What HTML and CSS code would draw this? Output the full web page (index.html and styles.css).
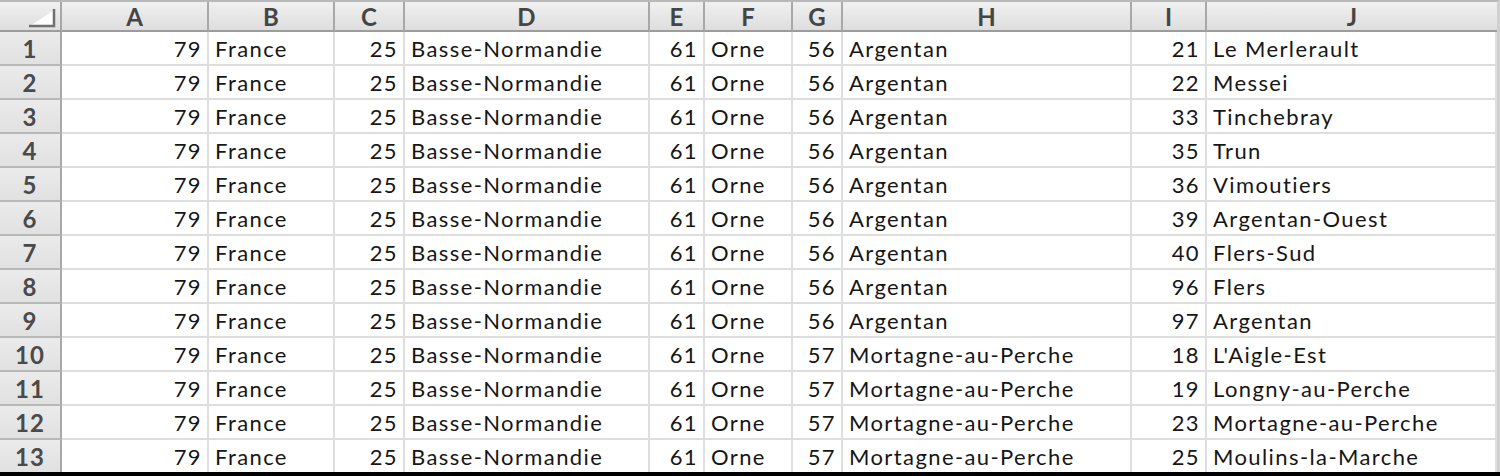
FILE: index.html
```html
<!DOCTYPE html>
<html>
<head>
<meta charset="utf-8">
<link rel="stylesheet" href="styles.css">
</head>
<body>
<div class="sheet">
  <div class="grid">
    <div class="hd corner"><svg class="tri" width="28" height="20" viewBox="0 0 28 20"><polygon points="25,1 25,17 1,17" fill="#fdfdfd"/><polyline points="25,0 25,17 0,17" fill="none" stroke="#6f6f6f" stroke-width="2.5"/></svg></div>
    <div class="hd">A</div><div class="hd">B</div><div class="hd">C</div><div class="hd">D</div><div class="hd">E</div><div class="hd">F</div><div class="hd">G</div><div class="hd">H</div><div class="hd">I</div><div class="hd last">J</div>

    <div class="rh">1</div><div class="c n">79</div><div class="c">France</div><div class="c n">25</div><div class="c">Basse-Normandie</div><div class="c n">61</div><div class="c">Orne</div><div class="c n">56</div><div class="c">Argentan</div><div class="c n">21</div><div class="c">Le Merlerault</div>
    <div class="rh">2</div><div class="c n">79</div><div class="c">France</div><div class="c n">25</div><div class="c">Basse-Normandie</div><div class="c n">61</div><div class="c">Orne</div><div class="c n">56</div><div class="c">Argentan</div><div class="c n">22</div><div class="c">Messei</div>
    <div class="rh">3</div><div class="c n">79</div><div class="c">France</div><div class="c n">25</div><div class="c">Basse-Normandie</div><div class="c n">61</div><div class="c">Orne</div><div class="c n">56</div><div class="c">Argentan</div><div class="c n">33</div><div class="c">Tinchebray</div>
    <div class="rh">4</div><div class="c n">79</div><div class="c">France</div><div class="c n">25</div><div class="c">Basse-Normandie</div><div class="c n">61</div><div class="c">Orne</div><div class="c n">56</div><div class="c">Argentan</div><div class="c n">35</div><div class="c">Trun</div>
    <div class="rh">5</div><div class="c n">79</div><div class="c">France</div><div class="c n">25</div><div class="c">Basse-Normandie</div><div class="c n">61</div><div class="c">Orne</div><div class="c n">56</div><div class="c">Argentan</div><div class="c n">36</div><div class="c">Vimoutiers</div>
    <div class="rh">6</div><div class="c n">79</div><div class="c">France</div><div class="c n">25</div><div class="c">Basse-Normandie</div><div class="c n">61</div><div class="c">Orne</div><div class="c n">56</div><div class="c">Argentan</div><div class="c n">39</div><div class="c">Argentan-Ouest</div>
    <div class="rh">7</div><div class="c n">79</div><div class="c">France</div><div class="c n">25</div><div class="c">Basse-Normandie</div><div class="c n">61</div><div class="c">Orne</div><div class="c n">56</div><div class="c">Argentan</div><div class="c n">40</div><div class="c">Flers-Sud</div>
    <div class="rh">8</div><div class="c n">79</div><div class="c">France</div><div class="c n">25</div><div class="c">Basse-Normandie</div><div class="c n">61</div><div class="c">Orne</div><div class="c n">56</div><div class="c">Argentan</div><div class="c n">96</div><div class="c">Flers</div>
    <div class="rh">9</div><div class="c n">79</div><div class="c">France</div><div class="c n">25</div><div class="c">Basse-Normandie</div><div class="c n">61</div><div class="c">Orne</div><div class="c n">56</div><div class="c">Argentan</div><div class="c n">97</div><div class="c">Argentan</div>
    <div class="rh">10</div><div class="c n">79</div><div class="c">France</div><div class="c n">25</div><div class="c">Basse-Normandie</div><div class="c n">61</div><div class="c">Orne</div><div class="c n">57</div><div class="c">Mortagne-au-Perche</div><div class="c n">18</div><div class="c">L'Aigle-Est</div>
    <div class="rh">11</div><div class="c n">79</div><div class="c">France</div><div class="c n">25</div><div class="c">Basse-Normandie</div><div class="c n">61</div><div class="c">Orne</div><div class="c n">57</div><div class="c">Mortagne-au-Perche</div><div class="c n">19</div><div class="c">Longny-au-Perche</div>
    <div class="rh">12</div><div class="c n">79</div><div class="c">France</div><div class="c n">25</div><div class="c">Basse-Normandie</div><div class="c n">61</div><div class="c">Orne</div><div class="c n">57</div><div class="c">Mortagne-au-Perche</div><div class="c n">23</div><div class="c">Mortagne-au-Perche</div>
    <div class="rh">13</div><div class="c n">79</div><div class="c">France</div><div class="c n">25</div><div class="c">Basse-Normandie</div><div class="c n">61</div><div class="c">Orne</div><div class="c n">57</div><div class="c">Mortagne-au-Perche</div><div class="c n">25</div><div class="c">Moulins-la-Marche</div>
  </div>
</div>
</body>
</html>
```

FILE: styles.css
```css
html, body {
  margin: 0;
  padding: 0;
}
body {
  width: 1500px;
  height: 476px;
  background: #000;
  overflow: hidden;
}
.sheet {
  width: 1500px;
  height: 472px;
  background: #fff;
  overflow: hidden;
  border-top: 2px solid #b9b9b9;
  box-sizing: border-box;
  border-right: 3px solid #d0d0d0;
}
.grid {
  display: grid;
  grid-template-columns: 62px 147px 126px 70px 245px 55px 88px 50px 289px 75px 290px;
  grid-template-rows: 30px repeat(13, 34px);
  font-family: "Lato", "Liberation Sans", sans-serif;
}
.hd {
  background: linear-gradient(#f0f0f0, #dedede);
  border-right: 2px solid #a8a8a8;
  border-bottom: 2px solid #9c9c9c;
  box-sizing: border-box;
  display: flex;
  align-items: center;
  justify-content: center;
  font-size: 24px;
  font-weight: 700;
  color: #454545;
  padding-top: 1px;
}
.hd.last {
  border-right: none;
}
.corner {
  justify-content: flex-end;
  align-items: flex-end;
  padding: 0 3px 1px 0;
}
.tri {
  display: block;
}
.rh {
  background: linear-gradient(#ebebeb, #e1e1e1);
  border-right: 2px solid #a8a8a8;
  border-bottom: 2px solid #b8b8b8;
  box-sizing: border-box;
  display: flex;
  align-items: center;
  justify-content: center;
  font-size: 24px;
  font-weight: 700;
  color: #4a4a4a;
  letter-spacing: 1px;
}
.c {
  border-right: 2px solid #dedede;
  border-bottom: 2px solid #dedede;
  box-sizing: border-box;
  display: flex;
  align-items: center;
  padding: 0 5px 0 6px;
  font-size: 22px;
  letter-spacing: 1.4px;
  color: #161616;
  white-space: nowrap;
  overflow: hidden;
}
.c.n {
  justify-content: flex-end;
}
```
